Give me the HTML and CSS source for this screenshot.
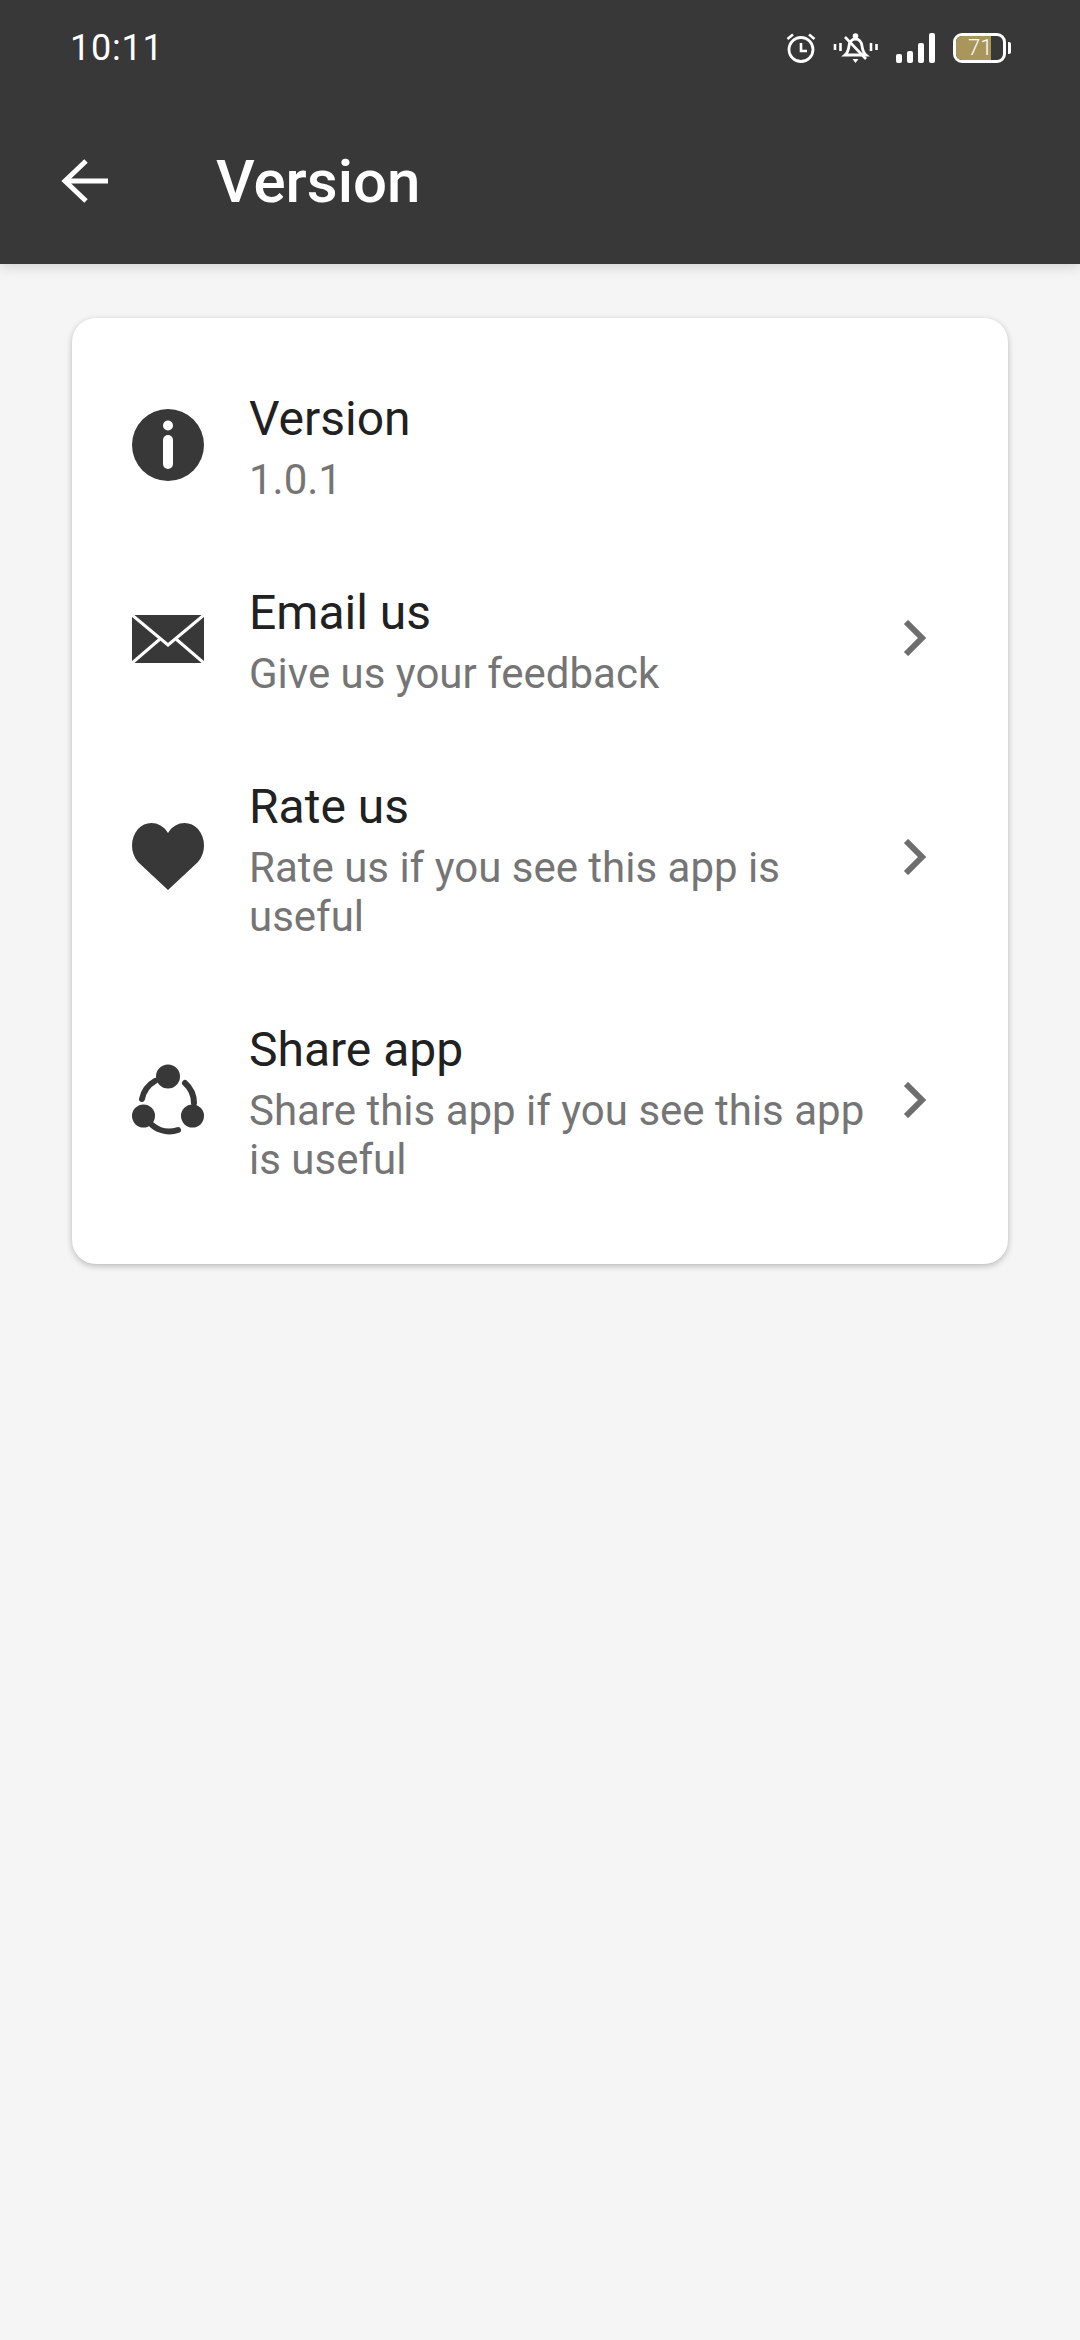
FILE: index.html
```html
<!DOCTYPE html>
<html lang="en">
<head>
  <meta charset="UTF-8" />
  <meta name="viewport" content="width=device-width, initial-scale=1.0"/>
  <title>Version</title>
  <link rel="stylesheet" href="styles.css">
</head>
<body>

<header class="appbar">
  <div class="status">
    <span class="clock">10:11</span>
    <div class="status-icons">
      <!-- alarm -->
      <svg class="ic-alarm" width="30" height="30" viewBox="0 0 30 30" fill="none" stroke="#fff">
        <circle cx="15" cy="16.5" r="12" stroke-width="2.8"/>
        <path d="M15 10v8h6" stroke-width="2.6"/>
        <path d="M1.500 6 7 1.500M28.500 6 23 1.500" stroke-width="2.6"/>
      </svg>
      <!-- muted bell -->
      <svg class="ic-mute" width="45" height="30" viewBox="0 0 45 30" fill="none" stroke="#fff">
        <path d="M2 11v6M7.500 10v8M38 10v8M43.500 11v6" stroke-width="2.600"/>
        <path d="M12 22c3-2.500 3.500-5 4-9 .5-4 3-7 6.500-7s6 3 6.500 7c.5 4 1 6.500 4 9z" stroke-width="2.800"/>
        <path d="M12 4 33 26" stroke-width="2.600"/>
        <circle cx="22.500" cy="3" r="2.800" fill="#fff" stroke="none"/>
        <path d="M19.500 26h6l-3 4z" fill="#fff" stroke="none"/>
      </svg>
      <!-- signal -->
      <div class="signal">
        <span class="bar b1"></span>
        <span class="bar b2"></span>
        <span class="bar b3"></span>
        <span class="bar b4"></span>
      </div>
      <div class="battery">
        <div class="battery-body">
          <div class="battery-fill"></div>
          <span class="battery-num">71</span>
        </div>
        <span class="battery-tip"></span>
      </div>
    </div>
  </div>
  <div class="toolbar">
    <svg class="back" width="48" height="46" viewBox="0 0 48 46" fill="none" stroke="#fff" stroke-width="5">
      <path d="M48 23H5M26 3 5 23 26 43"/>
    </svg>
    <h1>Version</h1>
  </div>
</header>

<main class="content">
  <section class="card">
    <div class="row">
      <svg class="row-icon" width="72" height="72" viewBox="0 0 72 72">
        <circle cx="36" cy="36" r="36" fill="#383838"/>
        <circle cx="36" cy="16.500" r="5" fill="#fff"/>
        <rect x="31" y="26" width="10" height="34" rx="5" fill="#fff"/>
      </svg>
      <div class="row-text">
        <div class="row-title">Version</div>
        <div class="row-sub">1.0.1</div>
      </div>
    </div>

    <div class="row">
      <svg class="row-icon" width="72" height="72" viewBox="0 0 72 72">
        <rect x="0" y="12" width="72" height="48" fill="#383838"/>
        <path d="M0 12 36 42 72 12M0 60 28 36M72 60 44 36" fill="none" stroke="#fff" stroke-width="3"/>
      </svg>
      <div class="row-text">
        <div class="row-title">Email us</div>
        <div class="row-sub">Give us your feedback</div>
      </div>
      <svg class="chevron" width="24" height="36" viewBox="0 0 24 36" fill="none" stroke="#6e6e6e" stroke-width="6">
        <path d="M3 2 19 18 3 34"/>
      </svg>
    </div>

    <div class="row">
      <svg class="row-icon" width="72" height="72" viewBox="0 0 72 72">
        <path d="M36 69 6 41C-2 32-2 17 6 8 14-1 29 0 36 12 43 0 58-1 66 8 74 17 74 32 66 41z" fill="#383838"/>
      </svg>
      <div class="row-text">
        <div class="row-title">Rate us</div>
        <div class="row-sub">Rate us if you see this app is useful</div>
      </div>
      <svg class="chevron" width="24" height="36" viewBox="0 0 24 36" fill="none" stroke="#6e6e6e" stroke-width="6">
        <path d="M3 2 19 18 3 34"/>
      </svg>
    </div>

    <div class="row">
      <svg class="row-icon" width="72" height="72" viewBox="0 0 72 72">
        <path d="M23 17A27 27 0 0 0 10 35M53 19A27 27 0 0 1 62 39M20 61A27 27 0 0 0 46 66" fill="none" stroke="#383838" stroke-width="6" stroke-linecap="round"/>
        <circle cx="36" cy="12.500" r="12" fill="#383838"/>
        <circle cx="11.500" cy="52" r="11.500" fill="#383838"/>
        <circle cx="60.500" cy="52" r="11.500" fill="#383838"/>
      </svg>
      <div class="row-text">
        <div class="row-title">Share app</div>
        <div class="row-sub">Share this app if you see this app is useful</div>
      </div>
      <svg class="chevron" width="24" height="36" viewBox="0 0 24 36" fill="none" stroke="#6e6e6e" stroke-width="6">
        <path d="M3 2 19 18 3 34"/>
      </svg>
    </div>
  </section>
</main>

</body>
</html>
```

FILE: styles.css
```css
html, body {
  height: 100%;
}
body {
  margin: 0;
  background: #f5f5f5;
  font-family: Roboto, sans-serif;
  color: #212121;
}
.appbar {
  height: 264px;
  background: #383838;
  color: #fff;
  box-shadow: 0 3px 12px rgba(0,0,0,0.14);
}
.status {
  display: flex;
  align-items: center;
  justify-content: space-between;
  height: 48px;
  padding: 24px 69px 0 70px;
}
.clock {
  font-size: 36px;
  letter-spacing: 0.8px;
}
.status-icons {
  display: flex;
  align-items: center;
}
.ic-alarm {
  margin-right: 17px;
}
.ic-mute {
  margin-right: 18px;
}
.signal {
  display: flex;
  align-items: flex-end;
  gap: 5px;
  height: 30px;
  margin-right: 18px;
}
.bar {
  width: 6px;
  background: #fff;
  border-radius: 2px;
}
.b1 { height: 9px; }
.b2 { height: 12px; }
.b3 { height: 20px; }
.b4 { height: 30px; }
.battery {
  display: flex;
  align-items: center;
  gap: 2px;
}
.battery-body {
  position: relative;
  box-sizing: border-box;
  width: 53px;
  height: 30px;
  border: 3px solid #fff;
  border-radius: 9px;
  overflow: hidden;
}
.battery-fill {
  width: 35px;
  height: 100%;
  background: #a8965a;
  border-radius: 4px 0 0 4px;
}
.battery-num {
  position: absolute;
  left: 12px;
  top: 0;
  font-size: 22px;
  line-height: 24px;
  font-weight: 300;
  color: #fff;
}
.battery-tip {
  width: 3px;
  height: 12px;
  background: #fff;
  border-radius: 0 2px 2px 0;
}
.toolbar {
  display: flex;
  align-items: center;
  height: 96px;
  margin-top: 61px;
  padding-left: 60px;
}
.back {
  margin-right: 108px;
}
.toolbar h1 {
  margin: 0;
  font-size: 60px;
  font-weight: 500;
}
.content {
  padding: 54px 72px;
}
.card {
  box-sizing: border-box;
  display: flex;
  flex-direction: column;
  gap: 77px;
  width: 936px;
  padding: 69px 60px 80px;
  background: #fff;
  border-radius: 24px;
  box-shadow: 0 2px 6px rgba(0,0,0,0.25);
}
.row {
  display: flex;
  align-items: center;
}
.row-icon {
  flex: none;
  margin: 0 45px 2px 0;
}
.row-text {
  flex: 1;
  min-width: 0;
  padding-right: 31px;
}
.row-title {
  margin-bottom: 4px;
  font-size: 48px;
  line-height: 64px;
}
.row-sub {
  font-size: 42px;
  line-height: 49px;
  color: #757575;
}
.chevron {
  flex: none;
  margin: 0 21px 3px 0;
}
```
